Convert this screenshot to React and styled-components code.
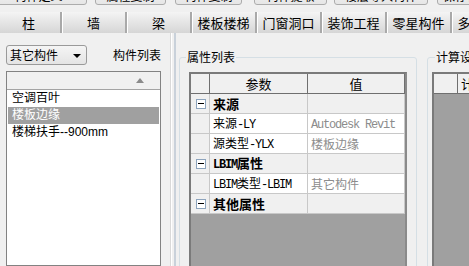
import React from "react";
import styled, { createGlobalStyle } from "styled-components";

const Global = createGlobalStyle`
  html, body { margin: 0; padding: 0; background: #f0f0f0; }
  body { font-family: "Noto Sans CJK SC", "Liberation Sans", sans-serif; }
  #root { width: 469px; height: 266px; overflow: hidden; }
`;

const Page = styled.div`
  width: 469px;
  height: 266px;
  overflow: hidden;
  display: flex;
  flex-direction: column;
  background: #f0f0f0;
  color: #000;
`;

const Toolbar = styled.div`
  height: 12px;
  flex: none;
  display: flex;
  align-items: flex-end;
  overflow: hidden;
`;

const ToolButton = styled.div`
  flex: none;
  box-sizing: border-box;
  width: ${(p) => p.$w}px;
  margin-left: ${(p) => p.$ml}px;
  height: 20px;
  margin-bottom: 7px;
  border: 1px solid #acacac;
  border-radius: 3px;
  background: linear-gradient(#f6f6f6, #e6e6e6);
  font-size: 12px;
  line-height: 12px;
  padding-top: 4px;
  text-align: center;
  color: #000;
  white-space: nowrap;
  overflow: hidden;
`;

const TabStrip = styled.div`
  height: 21px;
  flex: none;
  display: flex;
  overflow: hidden;
  background: linear-gradient(#f3f3f3, #d9d9d9);
`;

const Tab = styled.div`
  flex: none;
  box-sizing: border-box;
  width: 65px;
  margin-left: ${(p) => (p.$first ? -3 : 0)}px;
  height: 21px;
  border-right: 2px solid #a9a9a9;
  box-shadow: inset 1px 0 #ffffff;
  font-size: 13px;
  line-height: 21px;
  text-align: center;
  white-space: nowrap;
  background: linear-gradient(#f4f4f4, #d6d6d6);
`;

const Main = styled.div`
  flex: 1;
  display: flex;
  min-height: 0;
`;

const LeftPanel = styled.div`
  flex: none;
  width: 155px;
  padding: 12px 0 0 6px;
  display: flex;
  flex-direction: column;
`;

const LeftHead = styled.div`
  display: flex;
  align-items: center;
  height: 20px;
`;

const Combo = styled.div`
  box-sizing: border-box;
  width: 84px;
  height: 20px;
  border: 1px solid #9a9a9a;
  border-radius: 3px;
  background: linear-gradient(#f5f5f5, #e4e4e4);
  display: flex;
  align-items: center;
  justify-content: space-between;
  padding: 0 5px 0 3px;
  font-size: 12px;
  line-height: 18px;
`;

const ComboArrow = styled.span`
  width: 0;
  height: 0;
  border-left: 4px solid transparent;
  border-right: 4px solid transparent;
  border-top: 4px solid #000;
  margin-top: 1px;
`;

const PanelLabel = styled.span`
  margin-left: 26px;
  font-size: 12px;
  line-height: 14px;
  white-space: nowrap;
`;

const ListBox = styled.div`
  margin-top: 6px;
  flex: 1;
  box-sizing: border-box;
  border: 1px solid #828282;
  background: #fff;
  padding: 0 1px;
  display: flex;
  flex-direction: column;
`;

const ListHeader = styled.div`
  height: 17px;
  margin: 0 -1px;
  background: #f0f0f0;
  border-bottom: 1px solid #a3a3a3;
  display: flex;
  align-items: center;
  justify-content: flex-end;
  padding-right: 16px;
`;

const SortArrow = styled.span`
  width: 0;
  height: 0;
  border-left: 4px solid transparent;
  border-right: 4px solid transparent;
  border-bottom: 5px solid #8a8a8a;
`;

const ListItem = styled.div`
  height: 17px;
  line-height: 17px;
  padding-left: 4px;
  font-family: "Liberation Sans", "Noto Sans CJK SC", sans-serif;
  font-size: 12px;
  white-space: nowrap;
  background: ${(p) => (p.$selected ? "#a0a0a0" : "transparent")};
  color: ${(p) => (p.$selected ? "#fff" : "#000")};
`;

const Splitter = styled.div`
  flex: none;
  width: 6px;
  margin-left: 9px;
  margin-right: 3px;
  box-sizing: border-box;
  border-left: 1px solid #d9d9d9;
  border-right: 2px solid #c9d1da;
  background: linear-gradient(90deg, #ffffff 0 1px, #f0f0f0 1px);
`;

const Group = styled.div`
  flex: none;
  position: relative;
  box-sizing: border-box;
  width: ${(p) => p.$w}px;
  margin-left: ${(p) => p.$ml}px;
  margin-top: 24px;
  height: 260px;
  border: 1px solid #d5dfe5;
  border-radius: 3px;
  padding: 14px 0 0 ${(p) => p.$pl}px;
`;

const GroupLabel = styled.span`
  position: absolute;
  top: -9px;
  left: ${(p) => p.$left}px;
  padding: 0 1px;
  background: #f0f0f0;
  font-size: 12px;
  line-height: 16px;
  white-space: nowrap;
`;

const Grid = styled.div`
  box-sizing: border-box;
  width: ${(p) => p.$w}px;
  height: 240px;
  border: 2px solid #7a7a7a;
  border-right-color: #8a8a8a;
  background: #a0a0a0;
`;

const GridRow = styled.div`
  display: grid;
  grid-template-columns: ${(p) => p.$cols};
  height: 20px;
`;

const HeadCell = styled.div`
  box-sizing: border-box;
  background: #f0f0f0;
  border-right: 1px solid #6f6f6f;
  border-bottom: 1px solid #6f6f6f;
  font-size: 13px;
  line-height: 19px;
  text-align: ${(p) => (p.$left ? "left" : "center")};
  padding-left: ${(p) => (p.$left ? 3 : 0)}px;
  white-space: nowrap;
  overflow: hidden;
`;

const Cell = styled.div`
  box-sizing: border-box;
  background: ${(p) => (p.$light ? "#f0f0f0" : "#fff")};
  border-right: 1px solid #c8c8c8;
  border-bottom: 1px solid #c8c8c8;
  font-size: ${(p) => (p.$bold ? 13 : 12)}px;
  font-weight: ${(p) => (p.$bold ? 700 : 400)};
  color: ${(p) => (p.$muted ? "#8c8c8c" : "#000")};
  line-height: 19px;
  padding-left: 3px;
  white-space: nowrap;
  overflow: hidden;
  display: flex;
  align-items: center;
`;

const RowHead = styled.div`
  box-sizing: border-box;
  background: #f0f0f0;
  border-right: 1px solid #c8c8c8;
  border-bottom: 1px solid #c8c8c8;
  display: flex;
  align-items: center;
  justify-content: center;
  padding-left: 1px;
`;

const Collapse = styled.span`
  box-sizing: border-box;
  width: 10px;
  height: 10px;
  border: 1px solid #8da4bd;
  background: #fff;
  display: flex;
  align-items: center;
  justify-content: center;
  &::after {
    content: "";
    width: 6px;
    height: 1px;
    background: #000;
  }
`;

const Half = styled.span`
  font-family: "Liberation Mono", monospace;
  font-size: 12px;
  letter-spacing: -1.2px;
`;

const Mixed = ({ text }) =>
  text
    .split(/([\x00-\x7f]+)/)
    .filter((s) => s !== "")
    .map((s, i) =>
      /[\x00-\x7f]/.test(s) ? (
        <Half key={i}>{s}</Half>
      ) : (
        <React.Fragment key={i}>{s}</React.Fragment>
      )
    );

const buttons = [
  { w: 97, ml: -10, t: "构件定义" },
  { w: 71, ml: 8, t: "属性复制" },
  { w: 67, ml: 9, t: "构件复制" },
  { w: 73, ml: 12, t: "构件提取" },
  { w: 94, ml: 7, t: "楼层导入构件" },
  { w: 60, ml: 9, t: "保存构件" },
];

const tabs = ["柱", "墙", "梁", "楼板楼梯", "门窗洞口", "装饰工程", "零星构件", "多义构件"];

const items = ["空调百叶", "楼板边缘", "楼梯扶手--900mm"];

const rows = [
  { cat: true, p: "来源" },
  { p: "来源-LY", v: "Autodesk Revit" },
  { p: "源类型-YLX", v: "楼板边缘" },
  { cat: true, p: "LBIM属性" },
  { p: "LBIM类型-LBIM", v: "其它构件" },
  { cat: true, p: "其他属性" },
];

const COLS = "19px 98px 97px";

export default function App() {
  return (
    <Page>
      <Global />
      <Toolbar>
        {buttons.map((b) => (
          <ToolButton key={b.t} $w={b.w} $ml={b.ml}>
            {b.t}
          </ToolButton>
        ))}
      </Toolbar>
      <TabStrip>
        {tabs.map((t, i) => (
          <Tab key={t} $first={i === 0}>
            {t}
          </Tab>
        ))}
      </TabStrip>
      <Main>
        <LeftPanel>
          <LeftHead>
            <Combo>
              其它构件
              <ComboArrow />
            </Combo>
            <PanelLabel>构件列表</PanelLabel>
          </LeftHead>
          <ListBox>
            <ListHeader>
              <SortArrow />
            </ListHeader>
            {items.map((it, i) => (
              <ListItem key={it} $selected={i === 1}>
                {it}
              </ListItem>
            ))}
          </ListBox>
        </LeftPanel>
        <Splitter />
        <Group $w={238} $ml={0} $pl={9}>
          <GroupLabel $left={6}>属性列表</GroupLabel>
          <Grid $w={218}>
            <GridRow $cols={COLS}>
              <HeadCell />
              <HeadCell>参数</HeadCell>
              <HeadCell>值</HeadCell>
            </GridRow>
            {rows.map((r) => (
              <GridRow key={r.p} $cols={COLS}>
                <RowHead>{r.cat && <Collapse />}</RowHead>
                <Cell $light={r.cat} $bold={r.cat}>
                  <span>
                    <Mixed text={r.p} />
                  </span>
                </Cell>
                <Cell $light={r.cat} $muted>
                  {r.v && (
                    <span>
                      <Mixed text={r.v} />
                    </span>
                  )}
                </Cell>
              </GridRow>
            ))}
          </Grid>
        </Group>
        <Group $w={80} $ml={10} $pl={4}>
          <GroupLabel $left={7}>计算设置</GroupLabel>
          <Grid $w={80}>
            <GridRow $cols="24px 60px">
              <HeadCell />
              <HeadCell $left>计算</HeadCell>
            </GridRow>
          </Grid>
        </Group>
      </Main>
    </Page>
  );
}
